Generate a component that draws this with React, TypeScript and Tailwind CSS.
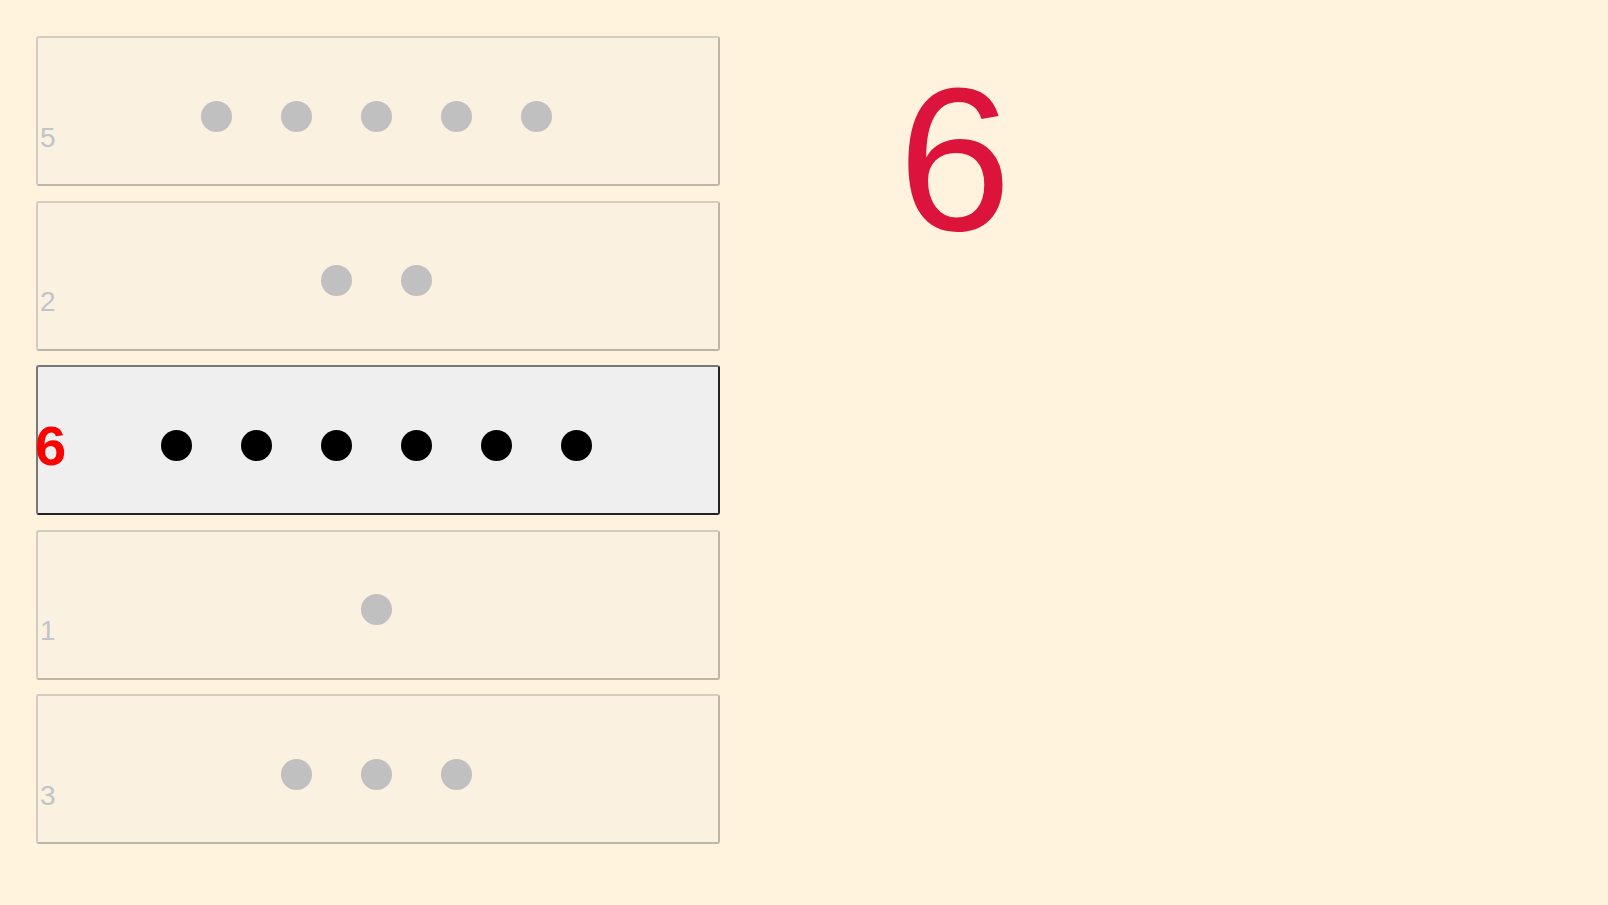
const rows = [
  { n: 5, active: false },
  { n: 2, active: false },
  { n: 6, active: true },
  { n: 1, active: false },
  { n: 3, active: false },
];

function Row({ n, active }: { n: number; active: boolean }) {
  return (
    <div
      className={
        active
          ? 'h-[150px] rounded-[3px] border-2 border-t-[#777777] border-l-[#777777] border-r-[#222222] border-b-[#222222] bg-[#efefef] grid grid-cols-[1fr_auto_1fr] items-center'
          : 'h-[150px] rounded-[3px] border-2 border-t-[#d4ccbe] border-l-[#d4ccbe] border-r-[#bdb5a8] border-b-[#bdb5a8] bg-[#faf1e1] grid grid-cols-[1fr_auto_1fr] items-center'
      }
    >
      <span
        className={
          active
            ? 'justify-self-start ml-[-3px] mt-[12px] text-[56px] leading-none font-bold text-[#ff0000]'
            : 'justify-self-start ml-[2px] mt-[53px] text-[28px] leading-none text-[#c2c4c9]'
        }
      >
        {n}
      </span>
      <div className="flex gap-[49px] pr-[4px] mt-[10px]">
        {Array.from({ length: n }).map((_, i) => (
          <span
            key={i}
            className={active ? 'w-[31px] h-[31px] rounded-full bg-black' : 'w-[31px] h-[31px] rounded-full bg-[#c0c0c0]'}
          />
        ))}
      </div>
      <span />
    </div>
  );
}

export default function App() {
  return (
    <div className="min-h-screen bg-[#fff3dd] flex pt-[36px] pl-[36px] font-['Liberation_Sans',Arial,sans-serif]">
      <div className="w-[684px] flex flex-col gap-[14.5px]">
        {rows.map((r) => (
          <Row key={r.n} n={r.n} active={r.active} />
        ))}
      </div>
      <div className="ml-[178px] mt-[21px] text-[204px] leading-none text-[#dc143c]">6</div>
    </div>
  );
}
